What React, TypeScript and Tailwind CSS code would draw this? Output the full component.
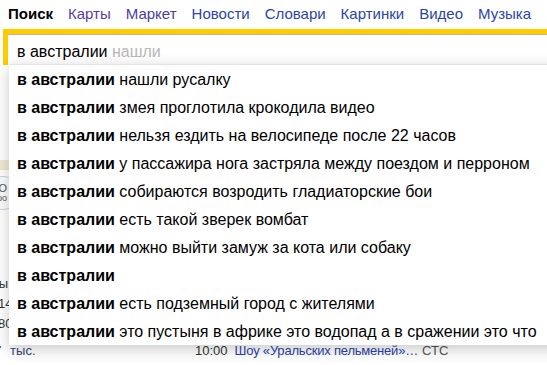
const navItems = [
  { label: "Карты", color: "text-[#5b3c9e]" },
  { label: "Маркет", color: "text-[#4a3ca6]" },
  { label: "Новости", color: "text-[#2b45a5]" },
  { label: "Словари", color: "text-[#2b45a5]" },
  { label: "Картинки", color: "text-[#2b45a5]" },
  { label: "Видео", color: "text-[#2b45a5]" },
  { label: "Музыка", color: "text-[#2b45a5]" },
];

const query = "в австралии";

const suggestions = [
  "нашли русалку",
  "змея проглотила крокодила видео",
  "нельзя ездить на велосипеде после 22 часов",
  "у пассажира нога застряла между поездом и перроном",
  "собираются возродить гладиаторские бои",
  "есть такой зверек вомбат",
  "можно выйти замуж за кота или собаку",
  "",
  "есть подземный город с жителями",
  "это пустыня в африке это водопад а в сражении это что",
];

export default function App() {
  return (
    <div className="relative w-[547px] h-[365px] overflow-hidden bg-white font-['Liberation_Sans',Arial,sans-serif] text-black">
      {/* tabs */}
      <nav className="flex items-baseline gap-[15px] h-[29px] pl-[8px] pt-[5px] text-[15px] leading-[18px]">
        <span className="font-bold">Поиск</span>
        {navItems.map((item) => (
          <a key={item.label} className={item.color}>
            {item.label}
          </a>
        ))}
      </nav>

      {/* search box */}
      <div className="ml-[3px] w-[560px] bg-[#ffcc00] pt-[5px] pl-[5px]">
        <div className="h-[31px] bg-white shadow-[inset_0_1px_0_rgba(120,100,0,0.45)] pl-[9px] pt-[9px] text-[16px] leading-[18px]">
          {query} <span className="text-[#b8b8b8]">нашли</span>
        </div>
      </div>

      {/* page content behind the suggestions */}
      <div className="text-[13px] leading-[16px] text-[#333]">
        <div className="h-[95px]" />
        <div className="w-[10px] h-[10px] bg-[#efe8d2]" />
        <div className="relative -ml-[20px] mt-[6px] w-[40px] h-[34px] rounded-full border border-[#c9d6e6] bg-[#fbfbfb] flex flex-col items-end pr-[12px] pt-[6px] text-[11px] leading-[10px] text-[#555]">
          <span>О</span>
          <span className="text-[9px]">оо</span>
        </div>
        <div className="h-[66px]" />
        <div className="-ml-[29px] h-[20px]">Курсы</div>
        <div className="-ml-[20px] h-[20px]">62,14</div>
        <div className="-ml-[20px] h-[20px]">70,80</div>
        <div className="h-[7px]" />
        <div className="flex items-baseline">
          <span className="-ml-[13px] w-[208px] text-[#3a4778]">
            <span className="text-[#2b45a5]">27</span> <span className="ml-[5px]">тыс.</span>
          </span>
          <span className="text-[#333]">10:00</span>
          <span className="ml-[7px] text-[#2b45a5] tracking-[-0.2px]">Шоу «Уральских пельменей»…</span>
          <span className="ml-[4px] text-[#555]">СТС</span>
        </div>
      </div>

      {/* suggestions dropdown */}
      <ul className="absolute left-[9px] top-[64px] w-[560px] bg-white border-t border-[#e3e3e3] shadow-[0_4px_14px_rgba(0,0,0,0.22)] text-[16px]">
        {suggestions.map((rest, i) => (
          <li key={i} className="h-[28px] leading-[29px] pl-[8px] whitespace-nowrap">
            <b>{query}</b>
            {rest && <span> {rest}</span>}
          </li>
        ))}
      </ul>
    </div>
  );
}
